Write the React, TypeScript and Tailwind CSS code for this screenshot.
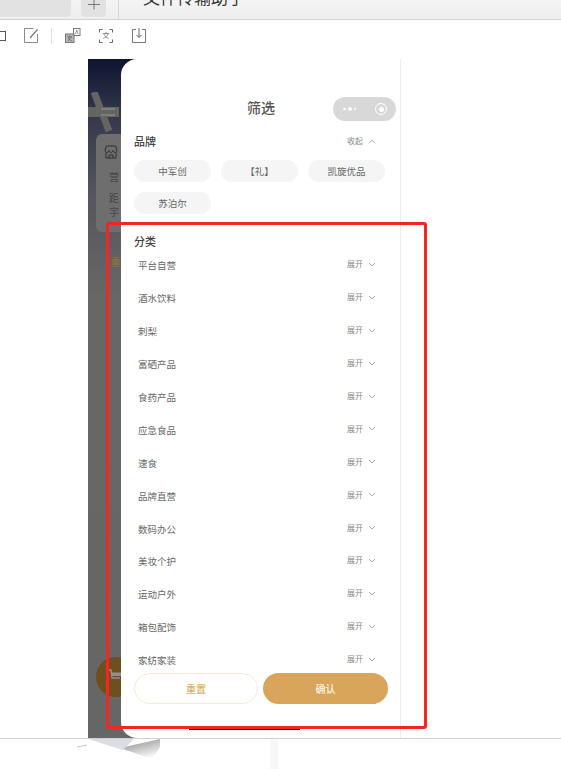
const rows = [
  "平台自营",
  "酒水饮料",
  "刺梨",
  "富硒产品",
  "食药产品",
  "应急食品",
  "速食",
  "品牌直营",
  "数码办公",
  "美妆个护",
  "运动户外",
  "箱包配饰",
  "家纺家装",
];

const font = "font-['Noto_Sans_CJK_SC','Liberation_Sans',sans-serif]";

function Chevron({ up }: { up?: boolean }) {
  return (
    <svg width="8" height="5" viewBox="0 0 8 5" fill="none" className="ml-[5px]">
      <path
        d={up ? "M1 4.2 4 1.200 7 4.200" : "M1 1 4 4 7 1"}
        stroke="#a8a8a8"
        strokeWidth="1"
      />
    </svg>
  );
}

function Toolbar() {
  return (
    <div className="h-[39px] shrink-0 flex items-center pb-[8px] bg-white">
      <div className="w-[6px] h-[10px] border border-l-0 border-[#555] mr-[18px]" />
      <svg width="15" height="15" viewBox="0 0 15 15" fill="none" className="mr-[12px]">
        <path d="M13.500 6v8.500H.5V.5h9" stroke="#8a8a8a" />
        <path d="M6 10 13.500 1.500" stroke="#777" strokeWidth="1.200" />
      </svg>
      <div className="w-px h-[16px] bg-[#e2e2e2] mr-[13px]" />
      <svg width="16" height="15" viewBox="0 0 16 15" fill="none" className="mr-[18px]">
        <rect x="8.500" y="0.500" width="6.500" height="7" stroke="#777" />
        <rect x="0.500" y="6" width="8.500" height="8.500" fill="#b8b8b8" stroke="#777" />
        <path d="M2.500 8.800h4.500M4.700 7.500v1.300M3 12.800 6.500 9M3 9c.6 1.800 2 3.200 3.800 3.800" stroke="#555" strokeWidth="0.700" />
        <path d="M10.500 6 11.800 2l1.300 4" stroke="#777" strokeWidth="0.700" />
      </svg>
      <svg width="14" height="14" viewBox="0 0 14 14" fill="none" className="mr-[19px]">
        <path d="M.5 3.500V.5h3M10.500.5h3v3M13.500 10.500v3h-3M3.500 13.500h-3v-3" stroke="#666" />
        <path d="M3.800 4.500h6.400M7 3v1.500M4.800 4.500c.6 2.500 2.400 4 5 5M9.200 4.500c-.6 2.500-2.400 4-5 5" stroke="#777" strokeWidth="0.800" />
      </svg>
      <svg width="14" height="15" viewBox="0 0 14 15" fill="none">
        <path d="M4 1.500H.5v13h13v-13H10" stroke="#777" />
        <path d="M7 0v9.500M4.500 7 7 9.500 9.500 7" stroke="#666" />
      </svg>
    </div>
  );
}

function FilterPanel() {
  return (
    <div className="relative ml-[33px] flex-1 min-w-0 bg-white rounded-l-[16px] pl-[13px] pr-[14px] flex flex-col">
      <div className="h-[71px] shrink-0 pt-[36px] pl-[2px] text-center text-[14px] leading-[24px] font-medium text-[#555]">
        筛选
      </div>

      <div className="absolute top-[38px] left-[212px] w-[63px] h-[24px] rounded-full bg-[#d8d8d8] flex items-center justify-between pl-[10px] pr-[9px]">
        <div className="flex items-center gap-[2px]">
          <span className="w-[2.5px] h-[2.5px] rounded-full bg-white" />
          <span className="w-[4px] h-[4px] rounded-full bg-white" />
          <span className="w-[2.5px] h-[2.5px] rounded-full bg-white" />
        </div>
        <div className="w-[12px] h-[12px] rounded-full border border-white flex items-center justify-center">
          <span className="w-[5px] h-[5px] rounded-full bg-white" />
        </div>
      </div>

      <div className="h-[22px] shrink-0 flex items-center justify-between pr-[10px]">
        <span className="text-[11px] font-medium text-[#444]">品牌</span>
        <div className="flex items-center text-[8px] text-[#888]">
          收起
          <Chevron up />
        </div>
      </div>

      <div className="grid grid-cols-[77px_77px_77px] gap-x-[10px] gap-y-[10px] mt-[8px] text-[9.5px] text-[#666]">
        {["中军创", "【礼】", "凯旋优品", "苏泊尔"].map((b) => (
          <div key={b} className="h-[22px] rounded-full bg-[#f5f5f5] flex items-center justify-center">
            {b}
          </div>
        ))}
      </div>

      <div className="mt-[19px] text-[11px] leading-[16px] font-medium text-[#444]">分类</div>

      <div className="flex flex-col pl-[4px] pr-[10px] text-[9.5px] text-[#666]">
        {rows.map((r) => (
          <div key={r} className="h-[32.9px] flex items-center justify-between">
            <span className="leading-[14px]">{r}</span>
            <div className="flex items-center mb-[2px] text-[8px] text-[#888]">
              展开
              <Chevron />
            </div>
          </div>
        ))}
      </div>

      <div className="absolute left-[13px] top-[614px] flex gap-[5px]">
        <div className="w-[124px] h-[31px] rounded-full bg-white border border-[#f1ebd6] flex items-center justify-center text-[10px] font-medium text-[#dcb26f]">
          重置
        </div>
        <div className="w-[125px] h-[31px] rounded-full bg-[#d9a55a] flex items-center justify-center text-[10px] font-medium text-[#fbf3e6]">
          确认
        </div>
      </div>

      <div className="absolute left-[68px] bottom-[8px] w-[111px] h-[3px] bg-black" />
    </div>
  );
}

function BackgroundStrip() {
  return (
    <div className="absolute left-0 top-0 w-[50px] h-full overflow-hidden blur-[0.5px]">
      <svg width="33" height="50" viewBox="0 0 33 50" fill="none" className="absolute left-0 top-[33px]">
        <path d="M6 0 21 39" stroke="#646463" strokeWidth="7" />
        <path d="M0 20h31" stroke="#646463" strokeWidth="10" />
        <path d="M13 17h14M13 23h14" stroke="#858583" strokeWidth="1.500" />
      </svg>
      <div className="absolute top-[75px] left-[8px] w-[60px] h-[98px] rounded-[6px] bg-[#6e6e6e]" />
      <svg width="14" height="14" viewBox="0 0 14 14" fill="none" className="absolute left-[16px] top-[86px]">
        <path d="M1 5 2.500 1h9L13 5c0 1.500-1 2.500-2 2.500S9 6.500 9 5.500c0 1-1 2-2 2s-2-1-2-2c0 1-1 2-2 2S1 6.500 1 5ZM2 7.500V13h10V7.500M5 13v-3h4v3" stroke="#2e2e2e" />
      </svg>
      <div className="absolute left-[21px] top-[111px] text-[10px] leading-[14px] text-[#454545]">营</div>
      <div className="absolute left-[21px] top-[132px] text-[10px] leading-[14px] text-[#454545]">距</div>
      <div className="absolute left-[21px] top-[146px] text-[10px] leading-[14px] text-[#454545]">字</div>
      <div className="absolute left-[23px] top-[196px] text-[10px] leading-[14px] font-medium text-[#96703a]">重</div>
      <div className="absolute top-[598px] left-[8px] w-[40px] h-[40px] rounded-full bg-[#6f4f20]">
        <svg width="16" height="16" viewBox="0 0 16 16" fill="none" className="absolute left-[11px] top-[11px]">
          <path d="M1 2h3l1 8h8" stroke="#8f8f8f" strokeWidth="1.500" />
          <path d="M4.500 4.500H15L14 8H5" fill="#8f8f8f" />
        </svg>
      </div>
    </div>
  );
}

export default function App() {
  return (
    <div className={`${font} w-[561px] h-[769px] bg-white overflow-hidden relative flex flex-col`}>
      <div className="h-[20px] shrink-0 bg-gradient-to-b from-[#f4f4f4] to-[#eeeeee] border-b border-[#d2d2d2] flex items-start overflow-hidden">
        <div className="w-[71px] h-[17px] bg-[#e2e2e2] rounded-br-[4px]" />
        <div className="ml-[10px] w-[25px] h-[17px] bg-[#e2e2e2] rounded-b-[4px] flex justify-center">
          <svg width="12" height="10" viewBox="0 0 12 10" fill="none">
            <path d="M0 4.500h12M6 0v9.500" stroke="#777" />
          </svg>
        </div>
        <div className="ml-[12px] w-px h-[19px] bg-[#d8d8d8]" />
        <div className="ml-[24px] -mt-[14px] text-[17px] leading-[22px] text-[#333] whitespace-nowrap">文件传输助手</div>
      </div>

      <Toolbar />

      <div className="h-[679px] shrink-0 pl-[88px] flex">
        <div className="relative w-[313px] flex border-r border-[#ececec] bg-[linear-gradient(to_bottom,#0e1430_0%,#333749_8%,#55565e_20%,#676767_35%,#666666_100%)]">
          <BackgroundStrip />
          <FilterPanel />
        </div>
      </div>

      <div className="flex-1 border-t border-[#d0d0d0] flex relative">
        <div className="ml-[270px] w-[8px] bg-[#f7f7f7]" />
        <svg width="100" height="24" viewBox="0 0 100 24" className="absolute left-[72px] top-0">
          <defs>
            <linearGradient id="wedgeShade" x1="0.2" y1="0" x2="0.7" y2="1">
              <stop offset="0" stopColor="#8c8c8c" />
              <stop offset="1" stopColor="#ffffff" />
            </linearGradient>
          </defs>
          <path d="M48 9 88 0 88 8 80 20Z" fill="url(#wedgeShade)" />
          <path d="M16 0 51 11 62 0Z" fill="#dcdce4" />
          <path d="M5 8 15 6" stroke="#c4c4c4" />
        </svg>
      </div>

      <div className="absolute left-[106px] top-[222px] w-[321px] h-[507px] border-[3px] border-[#f5261c] rounded-[3px]" />
    </div>
  );
}
